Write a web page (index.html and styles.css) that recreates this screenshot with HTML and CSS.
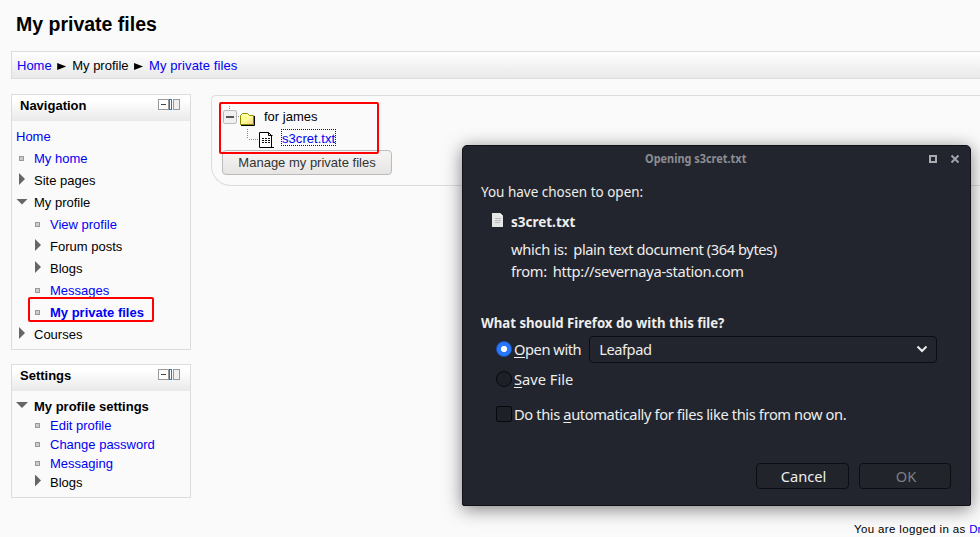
FILE: index.html
```html
<!DOCTYPE html>
<html lang="en">
<head>
<meta charset="utf-8">
<title>My private files</title>
<link rel="stylesheet" href="styles.css">
</head>
<body>
<svg width="0" height="0" class="defs">
  <defs>
    <linearGradient id="fold" x1="0" y1="0" x2="1" y2="1"><stop offset="0" stop-color="#ffffa0"/><stop offset=".5" stop-color="#ffff99"/><stop offset="1" stop-color="#f8c890"/></linearGradient>
    <symbol id="dock" viewBox="0 0 22 11">
      <rect x=".5" y=".5" width="10" height="10" fill="#fff" stroke="#999"/>
      <path d="M3 5.5h5" stroke="#444"/>
      <rect x="11.5" y=".5" width="2" height="10" fill="#fff" stroke="#0a80e0"/>
      <rect x="15.5" y=".5" width="6" height="10" fill="#eee" stroke="#999"/>
    </symbol>
  </defs>
</svg>
<h1>My private files</h1>
<nav class="crumbs"><a>Home</a><i class="sep"></i><span>My profile</span><i class="sep"></i><a>My private files</a></nav>
<div class="columns">
  <aside>
    <section class="block navigation">
      <header><h2>Navigation</h2><svg class="dock" width="22" height="11"><use href="#dock"/></svg></header>
      <ul class="tree">
        <li class="root"><a>Home</a></li>
        <li><i class="dot"></i><a>My home</a></li>
        <li><i class="closed"></i><span>Site pages</span></li>
        <li><i class="open"></i><span>My profile</span></li>
        <li class="sub"><i class="dot"></i><a>View profile</a></li>
        <li class="sub"><i class="closed"></i><span>Forum posts</span></li>
        <li class="sub"><i class="closed"></i><span>Blogs</span></li>
        <li class="sub"><i class="dot"></i><a>Messages</a></li>
        <li class="sub current"><i class="dot"></i><a>My private files</a><b class="mark"></b></li>
        <li><i class="closed"></i><span>Courses</span></li>
      </ul>
    </section>
    <section class="block settings">
      <header><h2>Settings</h2><svg class="dock" width="22" height="11"><use href="#dock"/></svg></header>
      <ul class="tree">
        <li class="current head"><i class="open"></i><span>My profile settings</span></li>
        <li class="sub"><i class="dot"></i><a>Edit profile</a></li>
        <li class="sub"><i class="dot"></i><a>Change password</a></li>
        <li class="sub"><i class="dot"></i><a>Messaging</a></li>
        <li class="sub"><i class="closed"></i><span>Blogs</span></li>
      </ul>
    </section>
  </aside>
  <main>
    <div class="files">
      <div class="row">
        <svg width="36" height="22" viewBox="0 0 36 22">
          <path d="M7.5 0v5M14 10.500h4" stroke="#888" stroke-dasharray="1 1"/>
          <rect x="1.500" y="4.500" width="13" height="13" rx="1.500" fill="#f0f0f0" stroke="#bbb"/>
          <path d="M4 11h8" stroke="#555" stroke-width="2"/>
          <path d="M18.500 18.500V9.500L20.500 7.500H25.500L27.500 9.500H31.500V18.500Z" fill="url(#fold)" stroke="#8a8a00"/>
          <path d="M19 19.500H32.500V10" fill="none" stroke="#000"/>
        </svg><span>for james</span>
      </div>
      <div class="row file">
        <svg width="54" height="22" viewBox="0 0 54 22">
          <path d="M25.500 1v10M27 11.500h10" fill="none" stroke="#888" stroke-dasharray="1 1"/>
          <path d="M37.500 4.500H46.500L49.500 7.500V19.500H37.500Z" fill="#fff" stroke="#000"/>
          <path d="M46.500 4.500V7.500H50.500M38 19.500H52" fill="none" stroke="#000"/>
          <path d="M40 10.500h8M40 12.500h8M40 14.500h8" stroke="#111" stroke-dasharray="2 1"/>
        </svg><a>s3cret.txt</a>
      </div>
      <b class="mark"></b>
    </div>
    <button class="manage">Manage my private files</button>
  </main>
</div>
<footer><span>You are logged in as</span> <a>Dr</a></footer>

<div class="dialog">
  <div class="titlebar"><strong>Opening s3cret.txt</strong>
    <svg width="32" height="10" viewBox="0 0 32 10"><rect x="2" y="2" width="6" height="6" fill="none" stroke="#aaacb0" stroke-width="2"/><path d="M23.500 1.500l7 7M30.500 1.500l-7 7" stroke="#a0a2a6" stroke-width="2"/></svg>
  </div>
  <p class="chosen"><span class="t1">You have chosen to open:</span></p>
  <div class="doc">
    <svg width="12" height="15" viewBox="0 0 12 15"><path d="M0 0h8l3 3v11H0Z" fill="#e6e6e6"/><path d="M8 0v3h3Z" fill="#fff"/><path d="M3 5.500h6M3 7.500h6M3 9.500h5" stroke="#bbb"/></svg>
    <strong class="t2">s3cret.txt</strong>
  </div>
  <p class="info"><span class="key">which is:</span><span class="t3">plain text document (364 bytes)</span></p>
  <p class="info"><span class="key">from:</span><span class="t4">http://severnaya-station.com</span></p>
  <p class="question"><strong class="t5">What should Firefox do with this file?</strong></p>
  <div class="choice openwith"><i class="radio on"></i><label><u>O</u>pen with</label>
    <div class="select"><span>Leafpad</span><svg width="12" height="8" viewBox="0 0 12 8"><path d="M1.500 1.500l4.500 4.500 4.500-4.500" fill="none" stroke="#eee" stroke-width="2"/></svg></div>
  </div>
  <div class="choice save"><i class="radio"></i><label><u>S</u>ave File</label></div>
  <div class="choice auto"><i class="check"></i><label class="t6">Do this <u>a</u>utomatically for files like this from now on.</label></div>
  <div class="actions"><button>Cancel</button><button disabled>OK</button></div>
</div>
</body>
</html>
```
FILE: styles.css
```css
* { box-sizing: border-box; }
body { margin: 0; width: 980px; height: 537px; overflow: hidden; position: relative; background: #fafafa; color: #000; font: 13px/22px "Liberation Sans", Arial, sans-serif; }
.defs { position: absolute; }
a { color: #0000f4; }
i { font-style: normal; flex: none; }
h1 { margin: 0; padding: 12px 0 0 16px; height: 51px; font-size: 19.5px; line-height: 24px; }
.crumbs { display: flex; align-items: center; height: 28px; margin-left: 11px; padding: 2px 0 0 5px; border: 1px solid #ddd; border-right: 0; background: linear-gradient(#fefefe, #e9e9e9); }
.crumbs a:last-child { letter-spacing: .1px; }
.sep { width: 9px; height: 7px; margin: 1px 6px 0 5.500px; background: #000; clip-path: polygon(0 0, 100% 50%, 0 100%); }
.columns { display: flex; padding: 15px 0 0 11px; }
aside { width: 180px; }
.block { border: 1px solid #ddd; background: #fafafa; margin-bottom: 14px; }
.block header { display: flex; justify-content: space-between; height: 26px; padding: 4px 10px 0 8px; background: linear-gradient(#fff 20%, #e9e9e9); }
.navigation { height: 256px; }
.settings { height: 134px; }
h2 { margin: 0; font-size: 13px; line-height: 14px; }
.tree { list-style: none; margin: 0; padding: 5px 0 0 4px; }
li { display: flex; align-items: center; height: 22px; position: relative; }
li a, li span { width: 156px; margin-left: auto; white-space: nowrap; }
li.root a { width: 174px; }
li.sub { padding-left: 16px; }
li.sub a, li.sub span { width: 140px; }
.current { font-weight: bold; }
.dot { width: 5px; height: 5px; margin: -1px 0 0 3px; background: #ccc; border: 1px solid #999; }
.closed { width: 6px; height: 12px; margin: -4px 0 0 3px; background: #666; clip-path: polygon(0 0, 100% 50%, 0 100%); }
.open { width: 12px; height: 6px; margin-top: -3px; background: #666; clip-path: polygon(0 0, 100% 0, 50% 100%); }
.settings li { height: 19px; }
.settings .tree { padding-top: 6px; }
.mark { position: absolute; border: 2px solid #f00; border-radius: 2px; }
li .mark { left: 12px; top: -5px; width: 126px; height: 25px; }
main { flex: 1; height: 91px; margin: 1px 0 0 20px; border: 1px solid #ddd; border-right: 0; border-radius: 5px 0 0 20px; padding: 10px; }
.files { position: relative; height: 44px; }
.files .mark { left: -3px; top: -4px; width: 160px; height: 52px; }
.row { display: flex; height: 22px; }
.row span { margin-left: 6px; line-height: 21px; }
.row a { margin: 2px 0 0 6px; height: 15px; line-height: 17px; letter-spacing: .05px; outline: 1px dotted #00e; }
.manage { display: block; width: 170px; height: 25px; padding: 0; border: 1px solid #bbb; border-radius: 4px; background: linear-gradient(#f6f5f4, #e6e5e4); color: #333; font: 13px "Liberation Sans", sans-serif; }
footer { position: absolute; left: 854px; top: 519px; white-space: nowrap; font-size: 11.5px; line-height: 20px; letter-spacing: .36px; }
footer a { letter-spacing: 0; }

.dialog { position: absolute; left: 462px; top: 145px; width: 509px; height: 361px; padding: 0 19px 0 18px; background: #23252e; border: 1px solid #101119; border-radius: 5px 5px 2px 2px; box-shadow: 0 3px 18px rgba(0,0,0,.5); color: #eeeeec; font: 14.67px/22px "Noto Sans", sans-serif; white-space: nowrap; }
.dialog p { margin: 0; }
.titlebar { display: flex; justify-content: space-between; height: 34px; margin-right: -9px; padding: 8px 0 0 164px; font-size: 12px; line-height: 10px; color: #8b8d92; }
.titlebar strong, .t1, .t2, .t5 { display: inline-block; transform: scaleX(.92); transform-origin: 0 0; }
.titlebar strong { transform: scaleX(.91); }
.t5 { transform: scaleX(.9); }
.t3 { letter-spacing: -.42px; }
.t4 { letter-spacing: -.29px; }
.doc { display: flex; height: 36px; padding: 8px 0 0 11px; }
.doc svg { margin-top: 3px; }
.doc strong { margin-left: 7px; }
.dialog .info { display: flex; gap: 6px; padding-left: 30px; }
.key { letter-spacing: -.3px; }
.dialog .question { margin-top: 29px; }
.choice { display: flex; align-items: center; padding-left: 15px; }
.choice label { margin-left: 2px; }
u { text-decoration: underline; text-underline-offset: 2px; }
.openwith { height: 32px; letter-spacing: -.45px; }
.radio, .check { width: 16px; height: 16px; border: 1px solid #08090d; background: #1e2028; }
.radio { border-radius: 50%; }
.on { border-color: #1b55bd; background: radial-gradient(circle, #fff 0 2.800px, #2777ff 3.300px); }
.check { border-radius: 2px; }
.select { display: flex; align-items: center; justify-content: space-between; width: 348px; height: 27px; margin-left: 8px; padding: 0 8px 0 9px; border: 1px solid #0c0d13; border-radius: 4px; }
.save { height: 28px; }
.auto { height: 42px; }
.choice .t6 { letter-spacing: -.38px; }
.actions { display: flex; gap: 10px; justify-content: flex-end; margin-top: 28px; }
.actions button { width: 93px; height: 26px; padding: 0 0 1px 2px; border: 1px solid #0c0d13; border-radius: 4px; background: #22242c; color: #eeeeec; font: inherit; line-height: 22px; }
.actions button:disabled { width: 92px; color: #7d7f85; }
```
